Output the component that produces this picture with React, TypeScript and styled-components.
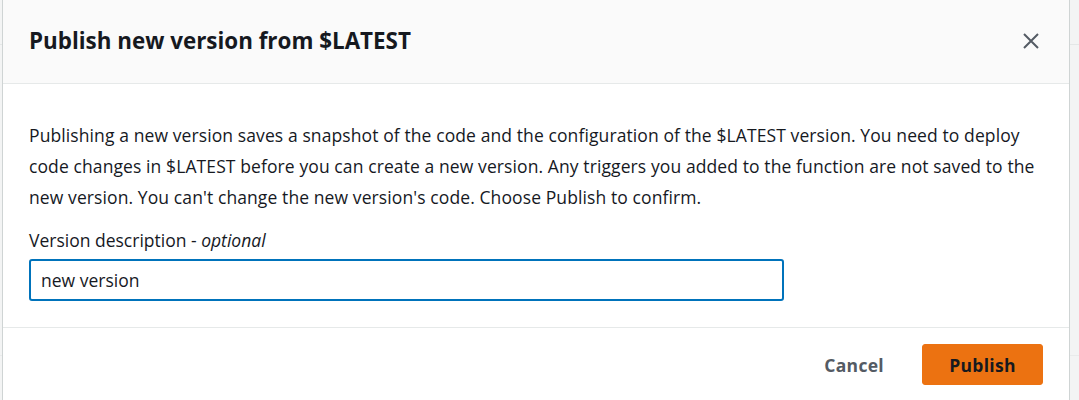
import React from "react";
import styled, { createGlobalStyle } from "styled-components";

const Global = createGlobalStyle`
  html, body { margin: 0; padding: 0; }
  body {
    background: #f2f3f3;
    font-family: "Open Sans", "Noto Sans", Arial, sans-serif;
    color: #16191f;
    overflow: hidden;
  }
`;

const Backdrop = styled.div`
  height: 400px;
  padding-left: 2px;
  display: flex;
  align-items: stretch;
  background:
    linear-gradient(#e4e7e7, #e4e7e7) 0 44px / 100% 1px no-repeat,
    linear-gradient(#e9ebeb, #e9ebeb) 0 355px / 100% 1px no-repeat,
    #f3f4f4;
`;

const Modal = styled.div`
  width: 1066px;
  background: #ffffff;
  border-left: 1px solid #cfd4d4;
  border-right: 1px solid #cfd4d4;
  display: flex;
  flex-direction: column;
`;

const Header = styled.header`
  height: 84px;
  box-sizing: border-box;
  background: #fafafa;
  border-bottom: 1px solid #e6e9e9;
  display: flex;
  align-items: center;
  justify-content: space-between;
  padding: 0 30px 2px 26px;
`;

const Title = styled.h2`
  margin: 0;
  font-size: 22.4px;
  font-weight: 700;
  color: #16191f;
  line-height: 30px;
`;

const CloseButton = styled.button`
  border: 0;
  background: transparent;
  padding: 0;
  width: 16px;
  height: 16px;
  display: flex;
  align-items: center;
  justify-content: center;
  color: #545b64;
  cursor: pointer;
`;

const Body = styled.div`
  padding: 36px 26px 26px 26px;
  display: flex;
  flex-direction: column;
`;

const Paragraph = styled.p`
  margin: 0;
  font-size: 17.5px;
  letter-spacing: 0.1px;
  line-height: 31px;
  color: #16191f;
`;

const Field = styled.div`
  margin-top: 14px;
  display: flex;
  flex-direction: column;
  gap: 5px;
`;

const Label = styled.label`
  font-size: 17.5px;
  line-height: 27px;
  color: #16191f;
  em { font-style: italic; }
`;

const Input = styled.input`
  box-sizing: border-box;
  width: 755px;
  height: 42px;
  border: 2px solid #0073bb;
  border-radius: 3px;
  padding: 0 10px;
  font-family: inherit;
  font-size: 17.5px;
  color: #16191f;
  outline: none;
  background: #fff;
`;

const Footer = styled.footer`
  border-top: 1px solid #e6e9e9;
  padding: 16px 26px 0 26px;
  display: flex;
  justify-content: flex-end;
  align-items: center;
  gap: 18px;
`;

const Button = styled.button<{ $primary?: boolean }>`
  height: 41px;
  box-sizing: border-box;
  padding: 0 ${(p) => (p.$primary ? "0" : "19px")};
  width: ${(p) => (p.$primary ? "121px" : "auto")};
  border-radius: 3px;
  border: 1px solid ${(p) => (p.$primary ? "#ec7211" : "transparent")};
  background: ${(p) => (p.$primary ? "#ec7211" : "transparent")};
  color: ${(p) => (p.$primary ? "#16191f" : "#545b64")};
  font-family: inherit;
  font-size: 17.5px;
  font-weight: 700;
  letter-spacing: 0.3px;
  text-align: center;
  cursor: pointer;
`;

export default function App() {
  return (
    <>
      <Global />
      <Backdrop>
        <Modal>
          <Header>
            <Title>Publish new version from $LATEST</Title>
            <CloseButton aria-label="Close">
              <svg width="16" height="16" viewBox="0 0 16 16">
                <path d="M1 1 L15 15 M15 1 L1 15" stroke="currentColor" strokeWidth="2" fill="none" />
              </svg>
            </CloseButton>
          </Header>
          <Body>
            <Paragraph>
              Publishing a new version saves a snapshot of the code and the configuration of the $LATEST version. You need to deploy
              code changes in $LATEST before you can create a new version. Any triggers you added to the function are not saved to the
              new version. You can't change the new version's code. Choose Publish to confirm.
            </Paragraph>
            <Field>
              <Label htmlFor="desc">
                Version description - <em>optional</em>
              </Label>
              <Input id="desc" defaultValue="new version" />
            </Field>
          </Body>
          <Footer>
            <Button>Cancel</Button>
            <Button $primary>Publish</Button>
          </Footer>
        </Modal>
      </Backdrop>
    </>
  );
}
